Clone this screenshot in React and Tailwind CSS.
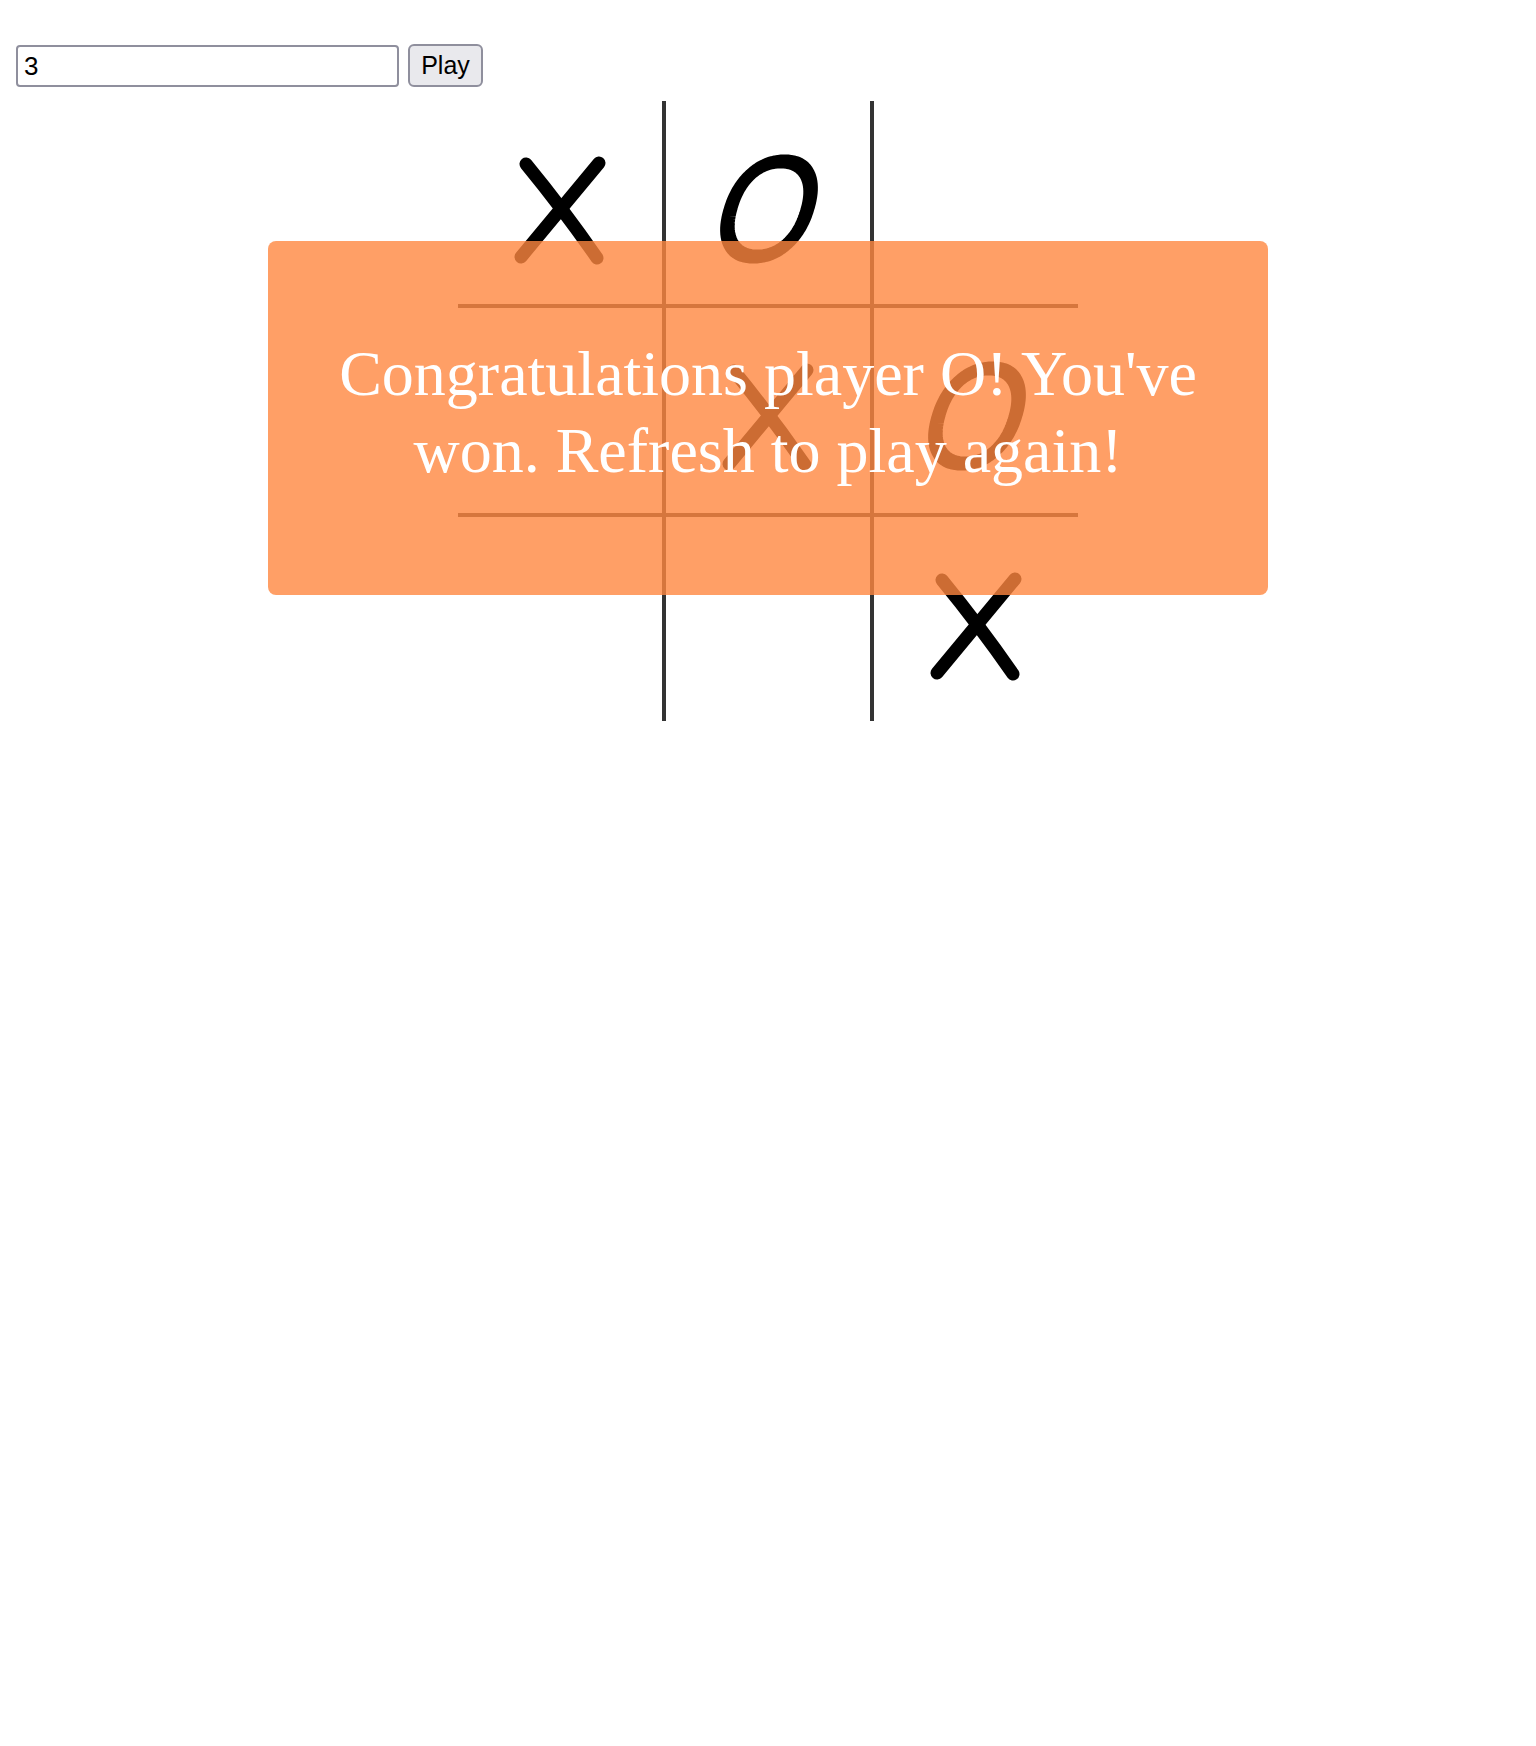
import React from 'react';

const board = [
  ['X', 'O', ''],
  ['', 'X', 'O'],
  ['', '', 'X'],
];

// rounded oval outline for the slanted O
const oPath = (() => {
  const rx = 38.5;
  const ry = 47.5;
  const e = 0.9;
  const pts = [];
  for (let i = 0; i < 96; i++) {
    const t = (i / 96) * Math.PI * 2;
    const c = Math.cos(t);
    const s = Math.sin(t);
    const x = rx * Math.sign(c) * Math.pow(Math.abs(c), e);
    const y = ry * Math.sign(s) * Math.pow(Math.abs(s), e);
    pts.push(`${x.toFixed(2)} ${y.toFixed(2)}`);
  }
  return `M${pts.join(' L')} Z`;
})();

const Mark = ({ value }) => {
  if (!value) return null;
  return (
    <svg
      viewBox="0 0 205 205"
      className="block w-[205px] h-[205px] shrink-0 overflow-visible"
    >
      {value === 'X' ? (
        <g stroke="#000" strokeWidth="13" strokeLinecap="round" fill="none">
          <path d="M68 63 Q105 108 139 157" />
          <path d="M141 62 Q103 108 63 156" />
        </g>
      ) : (
        <path
          d={oPath}
          fill="none"
          stroke="#000"
          strokeWidth="14"
          strokeLinejoin="round"
          transform="translate(103 108) skewX(-16)"
        />
      )}
    </svg>
  );
};

const cellClass = (r, c) => {
  const h = r === 0 ? 'h-[207px]' : r === 1 ? 'h-[209px]' : 'h-[204px]';
  if (r < 2 && c < 2) return `${h} border-r-4 border-b-4 border-[#333]`;
  if (r < 2) return `${h} border-b-4 border-[#333]`;
  if (c < 2) return `${h} border-r-4 border-[#333]`;
  return h;
};

export default function App() {
  return (
    <div className="min-h-[1746px] bg-white pt-[44px] pl-[16px] font-['Liberation_Sans',Arial,sans-serif]">
      <div className="flex items-center gap-[9px]">
        <input
          type="text"
          defaultValue="3"
          className="w-[383px] h-[42px] border-2 border-[#8f8f9d] rounded-[4px] pl-[6px] pt-[2px] text-[26px] text-black outline-none"
        />
        <button className="w-[75px] h-[43px] border-2 border-[#8f8f9d] rounded-[6px] bg-[#e9e9ed] text-[25px] text-black leading-none">
          Play
        </button>
      </div>

      <div className="relative w-[620px] mt-[14px] ml-[442px]">
        <div className="grid grid-cols-[208px_208px_204px]">
          {board.map((row, r) =>
            row.map((v, c) => (
              <div key={`${r}-${c}`} className={`overflow-visible ${cellClass(r, c)}`}>
                <Mark value={v} />
              </div>
            ))
          )}
        </div>

        <div className="absolute left-[-190px] top-[140px] w-[1000px] h-[354px] rounded-[8px] bg-[#ff8740cc] pt-[94px] px-[40px]">
          <p className="text-center text-white text-[64px] leading-[77px] font-['Liberation_Serif','Times_New_Roman',serif]">
            Congratulations player O! You've won. Refresh to play again!
          </p>
        </div>
      </div>
    </div>
  );
}
